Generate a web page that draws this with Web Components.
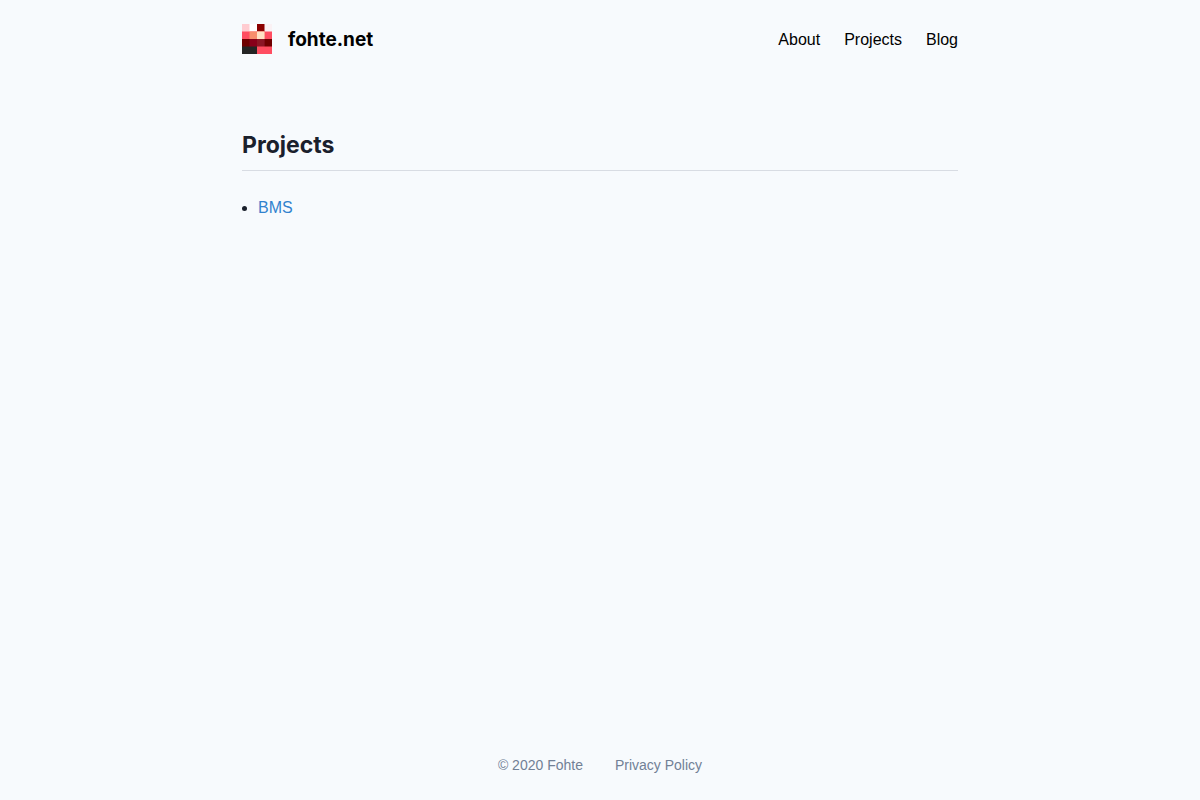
<!DOCTYPE html>
<html lang="en">
<head>
<meta charset="utf-8">
<meta name="viewport" content="width=device-width, initial-scale=1">
<title>Projects - fohte.net</title>
<style>
  body {
    margin: 0;
    background: #f7fafd;
    color: #1a202c;
    font: 16px/26px "Liberation Sans", Arial, sans-serif;
  }
</style>
</head>
<body>
<site-page>
  <site-header slot="header">
    <nav-link href="#about">About</nav-link>
    <nav-link href="#projects">Projects</nav-link>
    <nav-link href="#blog">Blog</nav-link>
  </site-header>
  <project-list heading="Projects"></project-list>
  <site-footer slot="footer"></site-footer>
</site-page>
<script>
  const define = (name, html, setup) => {
    const template = document.createElement('template');
    template.innerHTML = html;
    customElements.define(name, class extends HTMLElement {
      constructor() {
        super();
        this.attachShadow({ mode: 'open' }).append(template.content.cloneNode(true));
      }
      connectedCallback() {
        if (setup) setup(this, this.shadowRoot);
      }
    });
  };

  // Each cell runs on to the bottom right and is covered by the next one,
  // so that no seam shows between neighbours.
  define('site-logo', `
    <style>
      :host { display: block; width: 30px; height: 30px; }
      svg { display: block; width: 100%; height: 100%; }
    </style>
    <svg viewBox="0 0 4 4" aria-hidden="true">
      <path fill="#ffccd1" d="M0 0h4v4H0z"/>
      <path fill="#fff" d="M1 0h3v4H1z"/>
      <path fill="#8b0000" d="M2 0h2v4H2z"/>
      <path fill="#faf1f4" d="M3 0h1v4H3z"/>
      <path fill="#ff4d61" d="M0 1h4v3H0z"/>
      <path fill="#f88e6c" d="M1 1h2v3H1z"/>
      <path fill="#ffe2c5" d="M2 1h1v3H2z"/>
      <path fill="#6e0000" d="M0 2h4v2H0z"/>
      <path fill="#87001a" d="M1 2h2v2H1z"/>
      <path fill="#8b1625" d="M2 2h1v2H2z"/>
      <path fill="#242424" d="M0 3h2v1H0z"/>
      <path fill="#ff4d61" d="M2 3h2v1H2z"/>
    </svg>`);

  define('nav-link', `
    <style>
      :host { display: block; }
      a { color: #000; text-decoration: none; }
    </style>
    <a><slot></slot></a>`,
    (host, root) => { root.querySelector('a').href = host.getAttribute('href'); });

  define('site-header', `
    <style>
      :host { display: block; }
      header { display: flex; align-items: center; justify-content: space-between; }
      .brand {
        display: flex; align-items: center; gap: 16px;
        color: #000; text-decoration: none;
        font: 700 19px/26px Inter, sans-serif;
      }
      .brand span, nav { padding-top: 2px; }
      nav { display: flex; gap: 24px; }
    </style>
    <header>
      <a class="brand" href="#home"><site-logo></site-logo><span>fohte.net</span></a>
      <nav aria-label="Main"><slot></slot></nav>
    </header>`);

  define('project-list', `
    <style>
      :host { display: block; }
      h1 {
        margin: 0 0 24px; padding-bottom: 6px;
        border-bottom: 1px solid #d8dce3;
        font: 700 23px/38px Inter, sans-serif;
      }
      ul { margin: 0; padding-left: 16px; }
      a { color: #3182ce; text-decoration: none; }
    </style>
    <h1></h1>
    <ul><li><a href="#bms">BMS</a></li></ul>`,
    (host, root) => { root.querySelector('h1').textContent = host.getAttribute('heading'); });

  define('site-footer', `
    <style>
      :host { display: block; }
      footer {
        display: flex; justify-content: center; gap: 32px;
        color: #718096; font-size: 14px; line-height: 22px;
      }
      a { color: inherit; text-decoration: none; }
    </style>
    <footer><span>© 2020 Fohte</span><a href="#privacy">Privacy Policy</a></footer>`);

  define('site-page', `
    <style>
      :host {
        display: flex; flex-direction: column; box-sizing: border-box;
        min-height: 100vh; max-width: 764px;
        margin: 0 auto; padding: 24px;
      }
      main { flex: 1; padding: 72px 0 24px; }
    </style>
    <slot name="header"></slot>
    <main><slot></slot></main>
    <slot name="footer"></slot>`);
</script>
</body>
</html>
